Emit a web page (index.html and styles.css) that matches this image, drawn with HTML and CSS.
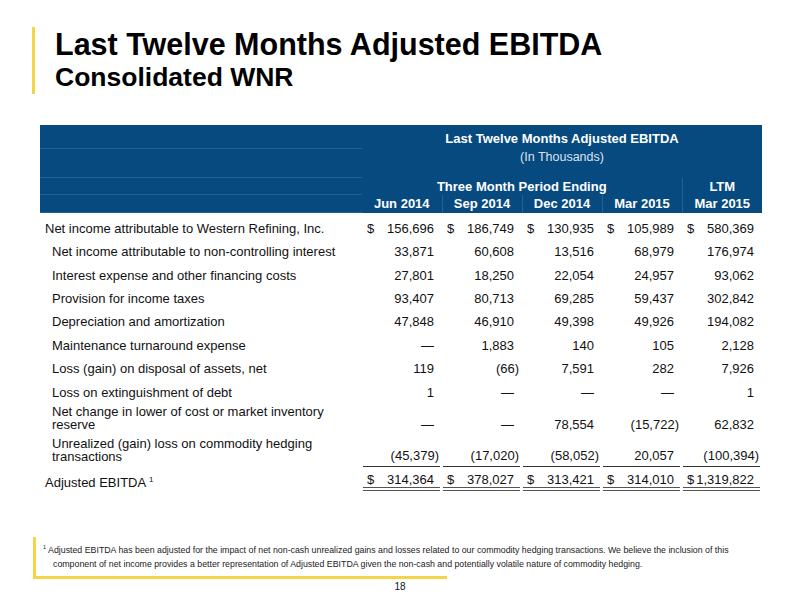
FILE: index.html
```
<!DOCTYPE html>
<html lang="en">
<head>
<meta charset="utf-8">
<title>Last Twelve Months Adjusted EBITDA</title>
<link rel="stylesheet" href="styles.css">
</head>
<body>

<div class="head">
  <h1>Last Twelve Months Adjusted EBITDA</h1>
  <h2>Consolidated WNR</h2>
</div>

<table class="ebitda">
  <colgroup>
    <col class="c-label"><col class="c-num"><col class="c-num"><col class="c-num"><col class="c-num"><col class="c-num">
  </colgroup>
  <thead>
    <tr class="h1">
      <th class="blank"></th>
      <th colspan="5">Last Twelve Months Adjusted EBITDA</th>
    </tr>
    <tr class="h2">
      <th class="blank"></th>
      <th colspan="5" class="sub">(In Thousands)</th>
    </tr>
    <tr class="h3">
      <th class="blank"></th>
      <th colspan="4">Three Month Period Ending</th>
      <th class="sep">LTM</th>
    </tr>
    <tr class="h4">
      <th class="blank"></th>
      <th>Jun 2014</th>
      <th class="sep">Sep 2014</th>
      <th class="sep">Dec 2014</th>
      <th class="sep">Mar 2015</th>
      <th class="sep">Mar 2015</th>
    </tr>
  </thead>
  <tbody>
    <tr class="first">
      <td class="label top">Net income attributable to Western Refining, Inc.</td>
      <td><div class="amt"><span class="cur">$</span>156,696</div></td>
      <td><div class="amt"><span class="cur">$</span>186,749</div></td>
      <td><div class="amt"><span class="cur">$</span>130,935</div></td>
      <td><div class="amt"><span class="cur">$</span>105,989</div></td>
      <td><div class="amt"><span class="cur">$</span>580,369</div></td>
    </tr>
    <tr>
      <td class="label">Net income attributable to non-controlling interest</td>
      <td><div class="amt">33,871</div></td>
      <td><div class="amt">60,608</div></td>
      <td><div class="amt">13,516</div></td>
      <td><div class="amt">68,979</div></td>
      <td><div class="amt">176,974</div></td>
    </tr>
    <tr>
      <td class="label">Interest expense and other financing costs</td>
      <td><div class="amt">27,801</div></td>
      <td><div class="amt">18,250</div></td>
      <td><div class="amt">22,054</div></td>
      <td><div class="amt">24,957</div></td>
      <td><div class="amt">93,062</div></td>
    </tr>
    <tr>
      <td class="label">Provision for income taxes</td>
      <td><div class="amt">93,407</div></td>
      <td><div class="amt">80,713</div></td>
      <td><div class="amt">69,285</div></td>
      <td><div class="amt">59,437</div></td>
      <td><div class="amt">302,842</div></td>
    </tr>
    <tr>
      <td class="label">Depreciation and amortization</td>
      <td><div class="amt">47,848</div></td>
      <td><div class="amt">46,910</div></td>
      <td><div class="amt">49,398</div></td>
      <td><div class="amt">49,926</div></td>
      <td><div class="amt">194,082</div></td>
    </tr>
    <tr>
      <td class="label">Maintenance turnaround expense</td>
      <td><div class="amt">&mdash;</div></td>
      <td><div class="amt">1,883</div></td>
      <td><div class="amt">140</div></td>
      <td><div class="amt">105</div></td>
      <td><div class="amt">2,128</div></td>
    </tr>
    <tr>
      <td class="label">Loss (gain) on disposal of assets, net</td>
      <td><div class="amt">119</div></td>
      <td><div class="amt"><span class="neg">(66)</span></div></td>
      <td><div class="amt">7,591</div></td>
      <td><div class="amt">282</div></td>
      <td><div class="amt">7,926</div></td>
    </tr>
    <tr>
      <td class="label">Loss on extinguishment of debt</td>
      <td><div class="amt">1</div></td>
      <td><div class="amt">&mdash;</div></td>
      <td><div class="amt">&mdash;</div></td>
      <td><div class="amt">&mdash;</div></td>
      <td><div class="amt">1</div></td>
    </tr>
    <tr class="two">
      <td class="label">Net change in lower of cost or market inventory<br>reserve</td>
      <td><div class="amt">&mdash;</div></td>
      <td><div class="amt">&mdash;</div></td>
      <td><div class="amt">78,554</div></td>
      <td><div class="amt"><span class="neg">(15,722)</span></div></td>
      <td><div class="amt">62,832</div></td>
    </tr>
    <tr class="two ruled">
      <td class="label">Unrealized (gain) loss on commodity hedging<br>transactions</td>
      <td><div class="amt"><span class="neg">(45,379)</span></div></td>
      <td><div class="amt"><span class="neg">(17,020)</span></div></td>
      <td><div class="amt"><span class="neg">(58,052)</span></div></td>
      <td><div class="amt">20,057</div></td>
      <td><div class="amt"><span class="neg">(100,394)</span></div></td>
    </tr>
    <tr class="total">
      <td class="label top">Adjusted EBITDA <sup>1</sup></td>
      <td><div class="amt"><span class="cur">$</span>314,364</div></td>
      <td><div class="amt"><span class="cur">$</span>378,027</div></td>
      <td><div class="amt"><span class="cur">$</span>313,421</div></td>
      <td><div class="amt"><span class="cur">$</span>314,010</div></td>
      <td><div class="amt"><span class="cur tight">$</span>1,319,822</div></td>
    </tr>
  </tbody>
</table>

<div class="foot">
  <p class="note"><sup>1</sup> Adjusted EBITDA has been adjusted for the impact of net non-cash unrealized gains and losses related to our commodity hedging transactions. We believe the inclusion of this<br>component of net income provides a better representation of Adjusted EBITDA given the non-cash and potentially volatile nature of commodity hedging.</p>
</div>

<div class="page-no">18</div>

</body>
</html>
```

FILE: styles.css
```
body {
  margin: 0;
  font-family: "Liberation Sans", Arial, sans-serif;
  color: #111;
  background: #fff;
}

/* slide title with the yellow bar */
.head {
  margin: 27px 0 0 32px;
  padding: 1px 0 1px 20px;
  border-left: 3.5px solid #f5d547;
}
.head h1 {
  margin: 0;
  font-size: 30.5px;
  line-height: 33px;
  font-weight: bold;
  color: #000;
}
.head h2 {
  margin: 0;
  font-size: 26.5px;
  line-height: 32px;
  font-weight: bold;
  color: #000;
}

/* table */
.ebitda {
  margin: 31px 0 0 40px;
  width: 720px;
  border-collapse: collapse;
  table-layout: fixed;
  font-size: 13px;
}
.c-label { width: 322px; }
.c-num { width: 80px; }

.ebitda thead th {
  background: #074a80;
  color: #fff;
  font-weight: bold;
  padding: 0;
  text-align: center;
  line-height: 15px;
}
.ebitda thead th.blank {
  border-bottom: 1px solid #25608f;
}
.h1 th { height: 23px; vertical-align: middle; }
.h1 th:not(.blank) { padding-top: 4px; height: 19px; }
.h2 th { height: 28px; vertical-align: top; }
.h2 th.sub {
  font-weight: normal;
  font-size: 12.5px;
  color: #dbe3ee;
  padding-top: 1px;
  height: 27px;
}
.h3 th { height: 16px; }
.h4 th { height: 17px; text-align: right; padding-right: 10px; }
.h4 th.blank { border-bottom: none; }
.ebitda thead th.sep { border-left: 1px solid #25608f; }

.ebitda tbody td {
  padding: 0;
  height: 23.4px;
  vertical-align: middle;
  line-height: 15px;
}
.ebitda tbody tr.first td { height: 23px; padding-top: 4px; }

.label { padding-left: 12px !important; white-space: nowrap; }
.label.top { padding-left: 5px !important; }
.label sup { font-size: 8px; vertical-align: 5px; }

.amt {
  display: flex;
  justify-content: flex-end;
  margin: 0 2px 0 1px;
  padding: 0 6px 0 4px;
}
.cur { margin-right: auto; }
.cur.tight { margin-right: 2px; }
.neg { margin-right: -5px; }

/* two line rows sit on their last line */
.ebitda tbody tr.two td {
  vertical-align: bottom;
  line-height: 13px;
  height: 31px;
}
.ebitda tbody tr.two td.label { padding-bottom: 4px; height: 27px; }
.ebitda tbody tr.two .amt { padding-bottom: 4px; }
.ebitda tbody tr.ruled td { height: 32px; }
.ebitda tbody tr.ruled td.label { height: 28px; }
.ruled .amt { border-bottom: 1px solid #333; }

.ebitda tbody tr.total td {
  height: auto;
  vertical-align: top;
}
.ebitda tbody tr.total td.label { padding-top: 5px; }
.total .amt {
  padding-top: 5px;
  border-bottom: 4px double #555;
}

/* footnote with the yellow corner */
.foot {
  margin: 46px 0 0 33px;
  border-left: 3px solid #f5d547;
}
.foot::after {
  content: "";
  display: block;
  width: 411px;
  height: 3px;
  margin-top: 5px;
  background: #f5d547;
}
.note {
  margin: 0;
  padding: 3px 0 0 17px;
  text-indent: -10px;
  font-size: 8.8px;
  line-height: 14px;
  color: #222;
  white-space: nowrap;
}
.note sup { font-size: 5.5px; vertical-align: 4px; }

.page-no {
  margin-top: 2px;
  text-align: center;
  font-size: 10px;
  line-height: 12px;
  color: #111;
}
```
